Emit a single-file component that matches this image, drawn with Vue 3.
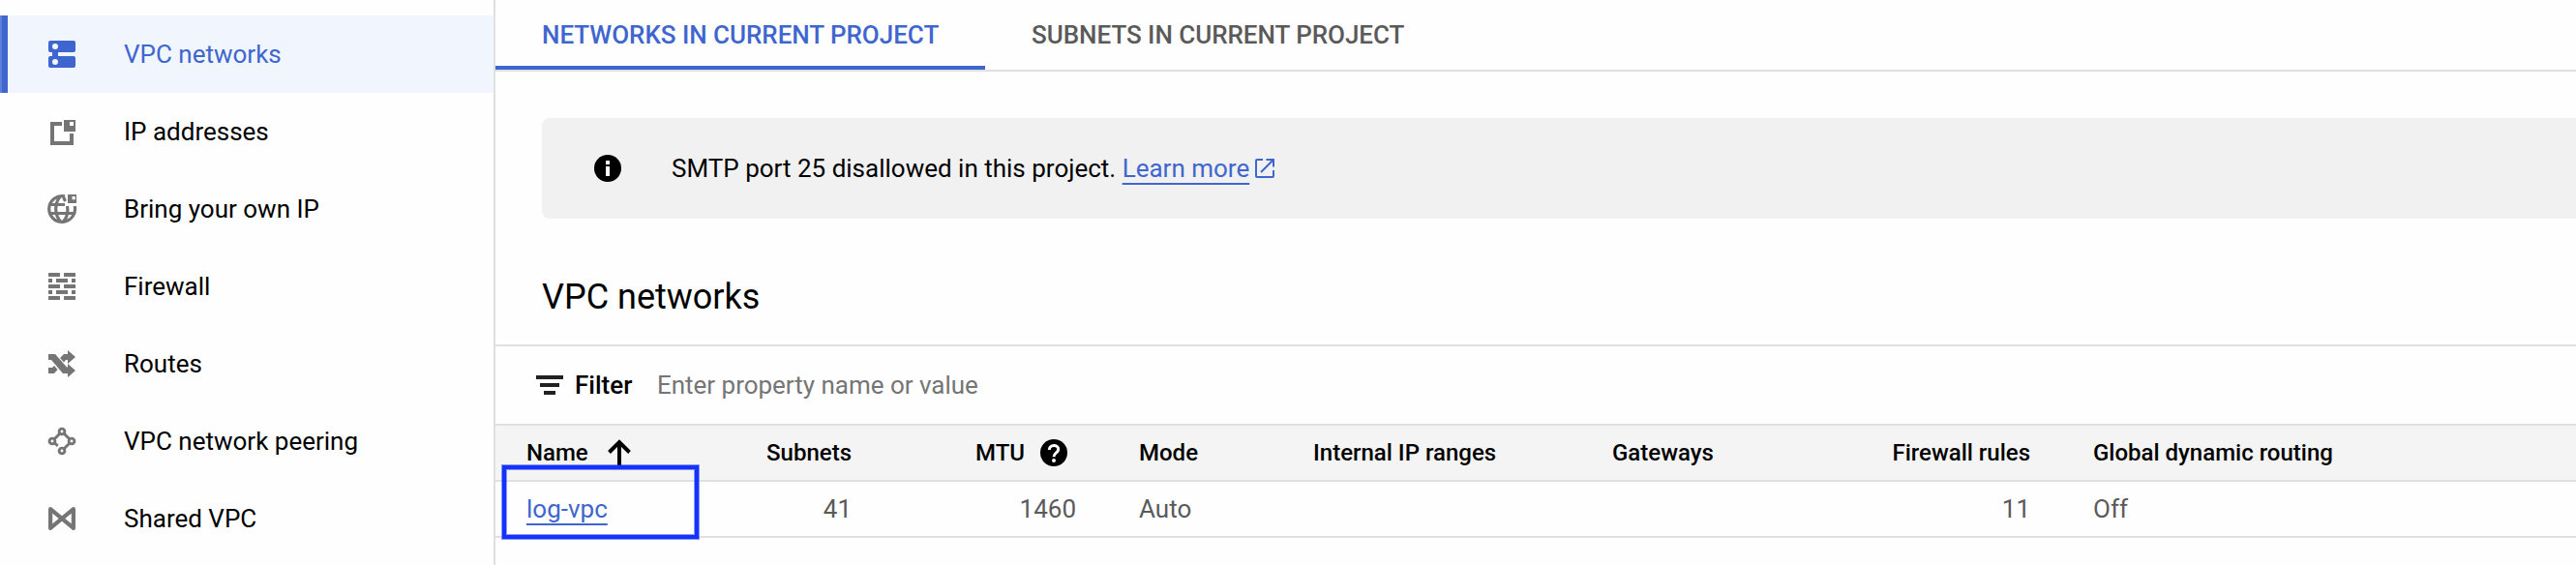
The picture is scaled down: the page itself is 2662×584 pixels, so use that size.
<script setup>
const nav = [
  { id: 'vpc', label: 'VPC networks', active: true },
  { id: 'ip', label: 'IP addresses' },
  { id: 'byoip', label: 'Bring your own IP' },
  { id: 'firewall', label: 'Firewall' },
  { id: 'routes', label: 'Routes' },
  { id: 'peering', label: 'VPC network peering' },
  { id: 'shared', label: 'Shared VPC' },
]
</script>

<template>
  <div class="page">
    <nav class="sidebar">
      <a v-for="n in nav" :key="n.id" class="item" :class="{ active: n.active }">
        <svg class="icon" viewBox="0 0 32 32" width="32" height="32" fill="currentColor">
          <path v-if="n.id === 'vpc'" fill-rule="evenodd" d="M4 2h24a2 2 0 0 1 2 2v8a2 2 0 0 1-2 2H12v4h16a2 2 0 0 1 2 2v8a2 2 0 0 1-2 2H4a2 2 0 0 1-2-2v-8a2 2 0 0 1 2-2h2v-4H4a2 2 0 0 1-2-2V4a2 2 0 0 1 2-2zM9 5a3 3 0 1 0 0 6a3 3 0 1 0 0-6zM9 21a3 3 0 1 0 0 6a3 3 0 1 0 0-6z" />
          <path v-else-if="n.id === 'ip'" fill-rule="evenodd" d="M4 6h12v4H8v16h16v-8h4v12H4zM18 4h12v12H18zM24 6v4h4V6z" />
          <g v-else-if="n.id === 'byoip'">
            <path fill="none" stroke="currentColor" stroke-width="3.200" d="M19 2.900A13.400 13.400 0 1 0 29.200 13M3 11.500H19M3 20.500H29M14.500 3C8 10 8 22 15 29.500M17 29.500C21.500 25 22.500 19 21.500 13M17 2.500L19.500 8" />
            <path fill-rule="evenodd" d="M22 1h9v9h-9zM26.500 3v3.200h3.200V3z" />
          </g>
          <path v-else-if="n.id === 'firewall'" d="M2 2h12v4H2zM18 2h12v4H18zM2 8h4v4H2zM10 8h12v4H10zM26 8h4v4h-4zM2 14h12v4H2zM18 14h12v4H18zM2 20h4v4H2zM10 20h12v4H10zM26 20h4v4h-4zM2 26h12v4H2zM18 26h12v4H18z" />
          <path v-else-if="n.id === 'routes'" d="M2 6h7l12 13.500h1V16l8 7l-8 7v-4h-5L5 12H2zM22 2l8 7l-8 7v-4h-2l-2 2.500l-4-4.500L18 6h4zM2 20h4l2-2l3.500 4L8 26H2z" />
          <g v-else-if="n.id === 'peering'" fill="none" stroke="currentColor" stroke-width="2.900">
            <path d="M13.500 8.500L8.500 13.500M18.500 8.500L23.500 13.500M23.500 18.500L18.500 23.500M8.500 18L11.800 20.800" />
            <circle cx="16" cy="6" r="2.900" /><circle cx="6" cy="16" r="2.900" /><circle cx="26" cy="16" r="2.900" /><circle cx="16" cy="26" r="2.900" />
          </g>
          <path v-else fill="none" stroke="currentColor" stroke-width="4.200" stroke-linejoin="round" d="M4.100 6.200L27.900 25.800V6.200L4.100 25.800z" />
        </svg>
        <span>{{ n.label }}</span>
      </a>
    </nav>

    <main class="main">
      <div class="tabs">
        <div class="tab on">NETWORKS IN CURRENT PROJECT</div>
        <div class="tab">SUBNETS IN CURRENT PROJECT</div>
      </div>

      <div class="banner">
        <svg class="info" width="28" height="28" viewBox="0 0 28 28"><circle cx="14" cy="14" r="14" /><path fill="#fff" d="M12 6h4v4h-4zM12 12h4v10h-4z" /></svg>
        <span class="msg">SMTP port 25 disallowed in this project. <a class="link">Learn more</a></span>
        <svg class="ext" width="20" height="20" viewBox="0 0 20 20" fill="none" stroke="#3f66cf" stroke-width="2"><path d="M8 1H2Q1 1 1 2V18Q1 19 2 19H18Q19 19 19 18V12M11.500 1H19V8.500M19 1L6 14" /></svg>
      </div>

      <h1>VPC networks</h1>

      <div class="filter">
        <svg width="28" height="20" viewBox="0 0 28 20" fill="#212121"><path d="M0 0h28v4H0zM4 8h20v4H4zM8 16h12v4H8z" /></svg>
        <b>Filter</b>
        <span class="ph">Enter property name or value</span>
      </div>

      <div class="row head">
        <div class="name">Name
          <svg width="24" height="28" viewBox="0 0 24 28" fill="none" stroke="#000" stroke-width="4"><path d="M12 28V3M1.500 13.500L12 3L22.500 13.500" /></svg>
        </div>
        <div class="num">Subnets</div>
        <div class="num mtu">MTU
          <svg width="28" height="28" viewBox="0 0 28 28"><circle cx="14" cy="14" r="14" /><path fill="none" stroke="#fff" stroke-width="3" d="M9.300 11C9.300 5 18.700 5 18.700 10.500C18.700 14 14 14 14 18.300" /><circle cx="14" cy="22" r="2" fill="#fff" /></svg>
        </div>
        <div class="mode">Mode</div>
        <div>Internal IP ranges</div>
        <div>Gateways</div>
        <div class="num">Firewall rules</div>
        <div class="routing">Global dynamic routing</div>
      </div>
      <div class="row body">
        <div class="name"><a class="link">log-vpc</a><i class="highlight"></i></div>
        <div class="num">41</div>
        <div class="num">1460</div>
        <div class="mode">Auto</div>
        <div></div>
        <div></div>
        <div class="num">11</div>
        <div class="routing">Off</div>
      </div>
    </main>
  </div>
</template>

<style>
body { margin: 0; background: #fff; overflow: hidden; }
</style>

<style scoped>
* { box-sizing: border-box; }
.page { display: flex; width: 2662px; height: 584px; overflow: hidden; background: #fefefe; font-family: Roboto, "Liberation Sans", sans-serif; font-size: 26px; line-height: 32px; color: #000; white-space: nowrap; }
.sidebar { flex: none; width: 512px; padding-top: 16px; border-right: 2px solid #e0e0e0; }
.item { display: flex; align-items: center; height: 80px; padding-left: 48px; gap: 48px; }
.icon { flex: none; color: #757575; }
.active { background: #f0f5fe; color: #3f66cf; box-shadow: inset 2px 0 #5f80d8, inset 8px 0 #3f66cf; }
.active .icon { color: #3f66cf; }
.main { flex: 1; min-width: 0; }
.tabs { display: flex; height: 74px; border-bottom: 2px solid #e0e0e0; }
.tab { height: 72px; padding: 20px 48px 0; font-weight: 500; letter-spacing: -0.035px; color: #5a5a5a; }
.tab.on { width: 506px; color: #3f66cf; border-bottom: 4px solid #3f66cf; }
.banner { display: flex; align-items: center; height: 104px; margin: 48px 0 0 48px; padding-left: 54px; background: #f1f1f1; border-radius: 8px 0 0 8px; }
.msg { margin-left: 52px; }
.ext { margin-left: 6px; }
.link { color: #3f66cf; text-decoration: underline; text-decoration-thickness: 2px; text-underline-offset: 6px; text-decoration-skip-ink: none; }
h1 { margin: 0; height: 130px; padding: 57px 0 0 48px; font-size: 36px; line-height: 48px; font-weight: 400; }
.filter { display: flex; align-items: center; height: 82px; padding-left: 42px; border-top: 2px solid #e0e0e0; }
.filter b { font-weight: 500; margin-left: 12px; width: 85px; }
.ph { color: #757575; letter-spacing: -0.02px; }
.row { display: grid; grid-template-columns: 160px 176px 232px 245px 309px 312px 120px 1fr; align-items: center; height: 58px; padding-left: 32px; }
.row .num { display: flex; justify-content: flex-end; }
.row .mode { padding-left: 65px; }
.row .routing { padding-left: 65px; }
.head { font-size: 24px; font-weight: 500; background: #f4f4f4; border-top: 2px solid #e0e0e0; }
.body { height: 60px; color: #5a5a5a; border-top: 2px solid #e0e0e0; border-bottom: 2px solid #e0e0e0; }
.name { position: relative; display: flex; align-items: center; gap: 20px; }
.row .mtu { align-items: center; gap: 16px; padding-right: 9px; }
.highlight { position: absolute; left: -25px; top: -29px; width: 203px; height: 76px; border: 4px solid #1432fa; box-shadow: 0 0 0 1px rgba(20, 50, 250, 0.5), inset 0 0 0 1px rgba(20, 50, 250, 0.5); }
</style>
